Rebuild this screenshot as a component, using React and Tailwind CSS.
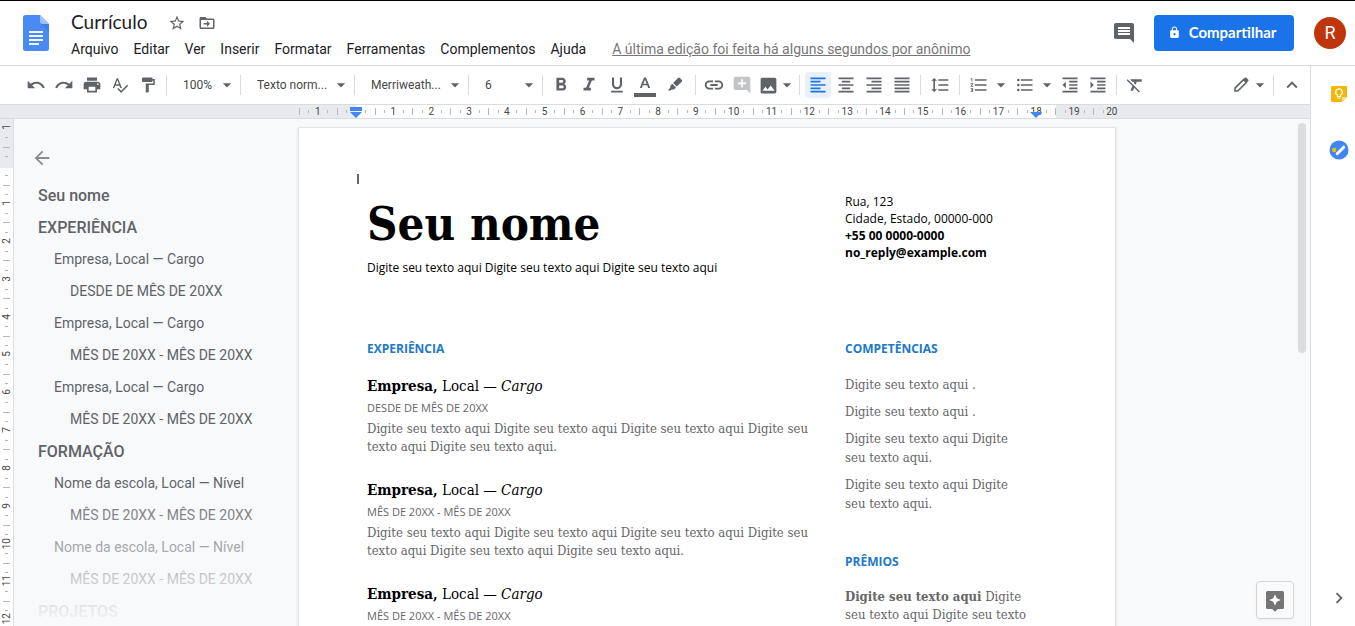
import React, { useState } from 'react';
import {
  MdAddComment,
  MdArrowBack,
  MdArrowDropDown,
  MdComment,
  MdFormatAlignCenter,
  MdFormatAlignJustify,
  MdFormatAlignLeft,
  MdFormatAlignRight,
  MdFormatBold,
  MdFormatClear,
  MdFormatIndentDecrease,
  MdFormatIndentIncrease,
  MdFormatItalic,
  MdFormatLineSpacing,
  MdFormatListBulleted,
  MdFormatListNumbered,
  MdFormatPaint,
  MdFormatUnderlined,
  MdImage,
  MdKeyboardArrowRight,
  MdKeyboardArrowUp,
  MdLink,
  MdLock,
  MdPrint,
  MdRedo,
  MdSpellcheck,
  MdStarBorder,
  MdUndo,
} from 'react-icons/md';

const menus = ['Arquivo', 'Editar', 'Ver', 'Inserir', 'Formatar', 'Ferramentas', 'Complementos', 'Ajuda'];

const outline = [
  { level: 1, text: 'Seu nome' },
  { level: 1, text: 'EXPERIÊNCIA' },
  { level: 2, text: 'Empresa, Local — Cargo' },
  { level: 3, text: 'DESDE DE MÊS DE 20XX' },
  { level: 2, text: 'Empresa, Local — Cargo' },
  { level: 3, text: 'MÊS DE 20XX - MÊS DE 20XX' },
  { level: 2, text: 'Empresa, Local — Cargo' },
  { level: 3, text: 'MÊS DE 20XX - MÊS DE 20XX' },
  { level: 1, text: 'FORMAÇÃO' },
  { level: 2, text: 'Nome da escola, Local — Nível' },
  { level: 3, text: 'MÊS DE 20XX - MÊS DE 20XX' },
  { level: 2, text: 'Nome da escola, Local — Nível' },
  { level: 3, text: 'MÊS DE 20XX - MÊS DE 20XX' },
  { level: 1, text: 'PROJETOS' },
];

const outlineStyles = {
  1: 'pt-0.5 pl-6 text-base font-medium',
  2: 'pl-10 text-sm',
  3: 'pl-14 text-sm',
};

const jobs = [
  {
    date: 'DESDE DE MÊS DE 20XX',
    lines: [
      'Digite seu texto aqui Digite seu texto aqui Digite seu texto aqui Digite seu',
      'texto aqui Digite seu texto aqui.',
    ],
  },
  {
    date: 'MÊS DE 20XX - MÊS DE 20XX',
    lines: [
      'Digite seu texto aqui Digite seu texto aqui Digite seu texto aqui Digite seu',
      'texto aqui Digite seu texto aqui Digite seu texto aqui.',
    ],
  },
  {
    date: 'MÊS DE 20XX - MÊS DE 20XX',
    lines: [],
  },
];

const skills = [
  ['Digite seu texto aqui .'],
  ['Digite seu texto aqui .'],
  ['Digite seu texto aqui Digite', 'seu texto aqui.'],
  ['Digite seu texto aqui Digite', 'seu texto aqui.'],
];

// one entry per centimetre, the origin has no label
const rulerMarks = ['1', ''].concat(Array.from({ length: 20 }, (_, i) => String(i + 1)));

const DocsLogo = () => (
  <svg width="26" height="36" viewBox="0 0 26 36">
    <path d="M2.500 0H17l9 9v24.500a2.500 2.500 0 0 1-2.500 2.500h-21A2.500 2.500 0 0 1 0 33.500v-31A2.500 2.500 0 0 1 2.500 0z" fill="#4a8af4" />
    <path d="M17 0l9 9h-6.500A2.500 2.500 0 0 1 17 6.500z" fill="#a1c2fa" />
    <path d="M17.700 8.600L26 17V9h-6.500z" fill="#3b78e0" opacity=".6" />
    <path d="M6 16h14v2H6zM6 20h14v2H6zM6 24h14v2H6zM6 28h10v2H6z" fill="#f1f5fe" />
  </svg>
);

const FolderMoveIcon = () => (
  <svg width="18" height="18" viewBox="0 0 24 24" fill="currentColor">
    <path
      fillRule="evenodd"
      d="M20 6h-8l-2-2H4c-1.100 0-2 .9-2 2v12c0 1.100.9 2 2 2h16c1.100 0 2-.9 2-2V8c0-1.100-.9-2-2-2zm0 12H4V8h16v10z"
    />
    <path d="M12 17l4-4-4-4v3H7.500v2H12z" />
  </svg>
);

const HighlighterIcon = () => (
  <svg width="16" height="16" viewBox="0 0 16 16" fill="currentColor">
    <path d="M11.200.8a1 1 0 0 1 1.400 0l2.300 2.300a1 1 0 0 1 0 1.400L9.800 9.600 6.100 5.900z" />
    <path d="M5.300 6.700l3.700 3.700-2 2H4.700L3.600 13.500H.8l2.500-2.800V8.700z" />
  </svg>
);

const PencilIcon = () => (
  <svg width="18" height="18" viewBox="0 0 18 18" fill="none" stroke="currentColor">
    <path d="M3 15v-2.800L11.500 3.700l2.800 2.800L5.800 15z" strokeWidth="1.600" />
    <path d="M11.200 3.400l1.700-1.700a1 1 0 0 1 1.400 0l2 2a1 1 0 0 1 0 1.400l-1.700 1.700z" fill="currentColor" stroke="none" />
  </svg>
);

const TextColorIcon = () => (
  <svg width="22" height="24" viewBox="0 0 22 24" fill="currentColor">
    <path d="M10 4.500h2l4.200 10.500h-2l-1-2.700H8.800l-1 2.700h-2zM9.400 10.700h3.200L11 6.500z" />
    <path d="M0 20h22v4H0z" />
  </svg>
);

const KeepIcon = () => (
  <svg width="16" height="16" viewBox="0 0 16 16">
    <path d="M1.200 0h13.600A1.200 1.200 0 0 1 16 1.200V11l-5 5H1.200A1.200 1.200 0 0 1 0 14.800V1.200A1.200 1.200 0 0 1 1.200 0z" fill="#f5b50a" />
    <path d="M11 16v-5h5z" fill="#fde08a" />
    <path d="M8 2.800a3.300 3.300 0 0 0-1.600 6.200v1.500h3.200V9A3.300 3.300 0 0 0 8 2.800zM6.500 12h3" fill="none" stroke="#fff" strokeWidth="1.200" />
  </svg>
);

const TasksIcon = () => (
  <svg width="20" height="20" viewBox="0 0 20 20">
    <circle cx="10" cy="10" r="9.500" fill="#4285f4" />
    <path d="M8.200 13.700l6.500-6.500" stroke="#fff" strokeWidth="3" strokeLinecap="round" />
    <circle cx="5.200" cy="10" r="2.200" fill="#fbbc04" />
  </svg>
);

const ExploreIcon = () => (
  <svg width="18" height="21" viewBox="0 0 18 21">
    <path d="M1.500 0h15A1.500 1.500 0 0 1 18 1.500v15a1.500 1.500 0 0 1-1.500 1.500h-4.700L9 20.800 6.200 18H1.500A1.500 1.500 0 0 1 0 16.500v-15A1.500 1.500 0 0 1 1.500 0z" fill="#757575" />
    <path d="M9 3.200l1.700 4.100L14.800 9l-4.100 1.700L9 14.800l-1.700-4.100L3.200 9l4.100-1.700z" fill="#fff" />
  </svg>
);

const ToolButton = ({ label, width = 'w-7', children }) => (
  <button type="button" aria-label={label} className={`flex h-7 shrink-0 items-center justify-center ${width}`}>
    {children}
  </button>
);

const Separator = () => <div className="mx-1 h-5 w-px shrink-0 bg-[#dadce0]" />;

const ToolSelect = ({ label, value, width }) => (
  <label className={`flex shrink-0 items-center ${width}`}>
    <select
      aria-label={label}
      defaultValue={value}
      className="min-w-0 flex-1 appearance-none bg-transparent pl-3 text-xs text-[#444746] outline-none"
    >
      <option>{value}</option>
    </select>
    <MdArrowDropDown size={20} className="pointer-events-none shrink-0" />
  </label>
);

const HorizontalRuler = () => (
  <div className="flex h-[15px] shrink-0 overflow-hidden border-y border-[#dadce0] bg-[#e8eaed] pl-[299px]">
    <div className="relative flex w-[816px] shrink-0 bg-[#e8eaed]">
      <div className="absolute inset-y-0 left-[57px] w-[700px] bg-white" />
      <div className="relative flex w-[832px] shrink-0">
        {rulerMarks.map((mark, i) => (
          <div key={i} className="grid min-w-0 flex-1 grid-cols-8 items-center text-[10px] leading-[13px] text-[#444746]">
            <span className="h-[7px] w-px bg-[#b5b8bc]" />
            <span />
            <span className="h-[3px] w-px bg-[#b5b8bc]" />
            <span className="col-span-3 flex justify-center pr-[5px]">{mark}</span>
            {i < rulerMarks.length - 1 && <span className="h-[3px] w-px bg-[#b5b8bc]" />}
          </div>
        ))}
      </div>
      <svg width="12" height="11" viewBox="0 0 12 11" className="absolute top-[2px] left-[51px]" fill="#4285f4">
        <path d="M0 0h12v4H0zM0 5h12l-6 6z" />
      </svg>
      <svg width="12" height="6" viewBox="0 0 12 6" className="absolute top-[7px] left-[731px]" fill="#4285f4">
        <path d="M0 0h12L6 6z" />
      </svg>
    </div>
  </div>
);

const VerticalRuler = () => (
  <div className="relative w-[14px] shrink-0 overflow-hidden border-r border-[#dadce0] bg-white">
    <div className="h-[49px] bg-[#e8eaed]" />
    <div className="absolute inset-x-0 -top-[10px] flex h-[832px] flex-col">
      {rulerMarks.map((mark, i) => (
        <div key={i} className="grid min-h-0 flex-1 grid-rows-8 justify-items-center text-[10px] leading-[13px] text-[#444746]">
          <span className="h-px w-[7px] bg-[#b5b8bc]" />
          <span />
          <span className="h-px w-[3px] bg-[#b5b8bc]" />
          <span className="row-span-3 flex min-h-0 items-center pb-[6px]">
            <span className="rotate-180 [writing-mode:vertical-rl]">{mark}</span>
          </span>
          <span className="h-px w-[3px] bg-[#b5b8bc]" />
        </div>
      ))}
    </div>
  </div>
);

const Header = () => {
  const [title, setTitle] = useState('Currículo');

  return (
    <header className="flex h-[66px] shrink-0 items-center border-t border-b border-t-black border-b-[#dadce0] pr-[9px] pl-[23px]">
      <DocsLogo />
      <div className="ml-[22px] flex flex-col pt-[3px]">
        <div className="flex h-7 items-center text-[#5f6368]">
          <input
            type="text"
            aria-label="Nome do documento"
            value={title}
            onChange={(e) => setTitle(e.target.value)}
            className="w-[91px] font-['Lato',sans-serif] text-[19px] text-[#202124] outline-none"
          />
          <button type="button" aria-label="Marcar com estrela" className="flex w-[30px] justify-center">
            <MdStarBorder size={18} />
          </button>
          <button type="button" aria-label="Mover" className="flex w-[30px] justify-center">
            <FolderMoveIcon />
          </button>
        </div>
        <div className="flex h-6 items-center text-sm whitespace-nowrap text-[#202124]">
          <nav className="flex gap-[15px]">
            {menus.map((menu) => (
              <button type="button" key={menu}>
                {menu}
              </button>
            ))}
          </nav>
          <a href="#historico" className="ml-[26px] text-[#777] underline">
            A última edição foi feita há alguns segundos por anônimo
          </a>
        </div>
      </div>
      <div className="ml-auto flex items-center gap-5">
        <button type="button" aria-label="Comentários" className="text-[#5f6368]">
          <MdComment size={24} className="-mr-0.5" />
        </button>
        <button
          type="button"
          className="flex h-9 w-[140px] items-center justify-center gap-2 rounded bg-[#1a73e8] pr-1 pb-0.5 font-['Lato',sans-serif] text-[15px] font-bold text-white"
        >
          <MdLock size={13} />
          Compartilhar
        </button>
        <button type="button" aria-label="Conta" className="h-8 w-8 rounded-full bg-[#bf360c] text-lg text-white">
          R
        </button>
      </div>
    </header>
  );
};

const Toolbar = () => (
  <div className="flex h-[38px] shrink-0 items-center pr-1 pl-[22px] text-[#5f6368]">
    <ToolButton label="Desfazer"><MdUndo size={20} /></ToolButton>
    <ToolButton label="Refazer"><MdRedo size={20} /></ToolButton>
    <ToolButton label="Imprimir"><MdPrint size={20} /></ToolButton>
    <ToolButton label="Ortografia"><MdSpellcheck size={18} /></ToolButton>
    <ToolButton label="Pintar formatação"><MdFormatPaint size={18} /></ToolButton>
    <Separator />
    <ToolSelect label="Zoom" value="100%" width="w-[66px] -mr-px" />
    <Separator />
    <ToolSelect label="Estilo" value="Texto norm..." width="w-[106px] -mr-px" />
    <Separator />
    <ToolSelect label="Fonte" value="Merriweath..." width="w-[106px] -mr-px" />
    <Separator />
    <ToolSelect label="Tamanho" value="6" width="w-[66px] -mr-px" />
    <Separator />
    <ToolButton label="Negrito"><MdFormatBold size={22} /></ToolButton>
    <ToolButton label="Itálico"><MdFormatItalic size={22} /></ToolButton>
    <ToolButton label="Sublinhado"><MdFormatUnderlined size={20} /></ToolButton>
    <ToolButton label="Cor do texto"><TextColorIcon /></ToolButton>
    <ToolButton label="Destaque" width="w-8"><HighlighterIcon /></ToolButton>
    <Separator />
    <ToolButton label="Inserir link"><MdLink size={22} /></ToolButton>
    <ToolButton label="Comentar">
      <MdAddComment size={20} className="text-[#c2c4c6]" />
    </ToolButton>
    <ToolButton label="Imagem" width="w-6"><MdImage size={21} /></ToolButton>
    <ToolButton label="Opções de imagem" width="w-[15px]"><MdArrowDropDown size={20} className="-ml-0.5 shrink-0" /></ToolButton>
    <Separator />
    <button
      type="button"
      aria-label="Alinhar à esquerda"
      className="mx-px flex h-[26px] w-[26px] shrink-0 items-center justify-center rounded-sm bg-[#e8f0fe] text-[#1a73e8]"
    >
      <MdFormatAlignLeft size={20} />
    </button>
    <ToolButton label="Centralizar"><MdFormatAlignCenter size={20} /></ToolButton>
    <ToolButton label="Alinhar à direita"><MdFormatAlignRight size={20} /></ToolButton>
    <ToolButton label="Justificar"><MdFormatAlignJustify size={20} /></ToolButton>
    <Separator />
    <ToolButton label="Espaçamento" width="w-[30px]"><MdFormatLineSpacing size={20} /></ToolButton>
    <Separator />
    <ToolButton label="Lista numerada" width="w-[30px]"><MdFormatListNumbered size={20} /></ToolButton>
    <ToolButton label="Opções de lista numerada" width="w-4"><MdArrowDropDown size={20} className="-ml-0.5 shrink-0" /></ToolButton>
    <ToolButton label="Lista com marcadores" width="w-[30px]"><MdFormatListBulleted size={20} /></ToolButton>
    <ToolButton label="Opções de marcadores" width="w-4"><MdArrowDropDown size={20} className="-ml-0.5 shrink-0" /></ToolButton>
    <ToolButton label="Diminuir recuo"><MdFormatIndentDecrease size={20} /></ToolButton>
    <ToolButton label="Aumentar recuo"><MdFormatIndentIncrease size={20} /></ToolButton>
    <Separator />
    <ToolButton label="Limpar formatação"><MdFormatClear size={20} /></ToolButton>
    <div className="ml-auto flex items-center">
      <ToolButton label="Modo de edição" width="w-6"><PencilIcon /></ToolButton>
      <ToolButton label="Opções de modo" width="w-4"><MdArrowDropDown size={20} className="-ml-0.5 shrink-0" /></ToolButton>
      <Separator />
      <ToolButton label="Ocultar menus"><MdKeyboardArrowUp size={22} /></ToolButton>
    </div>
  </div>
);

const Outline = () => (
  <nav className="relative w-[284px] shrink-0 overflow-hidden pt-7 text-[#5f6368]">
    <button type="button" aria-label="Fechar estrutura" className="ml-[17px] block text-[#8a8d91]">
      <MdArrowBack size={22} />
    </button>
    <ul className="mt-[10px]">
      {outline.map((item, i) => (
        <li key={i} className={`flex h-8 items-center whitespace-nowrap ${outlineStyles[item.level]}`}>
          {item.text}
        </li>
      ))}
    </ul>
    <div className="pointer-events-none absolute inset-x-0 bottom-0 h-36 bg-linear-to-b from-transparent to-[#f8f9fa]" />
  </nav>
);

const SectionTitle = ({ children }) => (
  <h2 className="font-['Open_Sans',sans-serif] text-xs leading-[17px] font-bold text-[#2079c7]">{children}</h2>
);

const Lines = ({ lines }) =>
  lines.map((line, i) => (
    <React.Fragment key={i}>
      {i > 0 && <br />}
      {line}
    </React.Fragment>
  ));

const Page = () => (
  <article className="relative mt-2 h-[1056px] w-[818px] shrink-0 border border-[#e3e5e8] bg-white pt-16 pl-[68px] font-['DejaVu_Serif_Condensed','Liberation_Serif',serif] shadow-sm">
    {/* text cursor */}
    <div className="absolute top-[46px] left-[58px] h-[10px] w-0.5 bg-[#666]" />
    <div className="grid grid-cols-[478px_1fr] text-black">
      <div>
        <h1 className="text-[47px] leading-16 font-bold">Seu nome</h1>
        <p className="mt-[3px] font-['Open_Sans',sans-serif] text-xs leading-[17px]">
          Digite seu texto aqui Digite seu texto aqui Digite seu texto aqui
        </p>
      </div>
      <address className="pt-px font-['Open_Sans',sans-serif] text-xs leading-[17px] not-italic">
        Rua, 123
        <br />
        Cidade, Estado, 00000-000
        <br />
        <strong>
          +55 00 0000-0000
          <br />
          no_reply@example.com
        </strong>
      </address>
    </div>
    <div className="mt-16 grid grid-cols-[478px_1fr] text-[13px] text-[#666]">
      <section>
        <SectionTitle>EXPERIÊNCIA</SectionTitle>
        <div className="mt-[19px] flex flex-col gap-6">
          {jobs.map((job, i) => (
            <div key={i} className="whitespace-nowrap">
              <h3 className="text-[15px] leading-5 text-black">
                <strong>Empresa,</strong> Local — <em>Cargo</em>
              </h3>
              <p className="mt-1 font-['Open_Sans',sans-serif] text-[11px] leading-4">{job.date}</p>
              <p className="mt-1 leading-[18px]">
                <Lines lines={job.lines} />
              </p>
            </div>
          ))}
        </div>
      </section>
      <section>
        <SectionTitle>COMPETÊNCIAS</SectionTitle>
        <div className="mt-[18px] flex flex-col gap-2 leading-[19px]">
          {skills.map((lines, i) => (
            <p key={i}>
              <Lines lines={lines} />
            </p>
          ))}
        </div>
        <div className="mt-10">
          <SectionTitle>PRÊMIOS</SectionTitle>
          <p className="mt-[18px] leading-[18px]">
            <strong>Digite seu texto aqui</strong> Digite
            <br />
            seu texto aqui Digite seu texto
          </p>
        </div>
      </section>
    </div>
  </article>
);

const SideRail = () => (
  <aside className="flex w-[45px] shrink-0 flex-col items-center border-l border-[#dadce0] pt-5 pb-[17px] pl-3">
    <button type="button" aria-label="Keep"><KeepIcon /></button>
    <button type="button" aria-label="Tarefas" className="mt-[38px]"><TasksIcon /></button>
    <button type="button" aria-label="Ocultar painel lateral" className="mt-auto text-[#5f6368]">
      <MdKeyboardArrowRight size={22} />
    </button>
  </aside>
);

const App = () => {
  return (
    <div className="flex h-screen flex-col overflow-hidden bg-white font-['Roboto',sans-serif]">
      <Header />
      <div className="flex min-h-0 flex-1">
        <main className="flex min-w-0 flex-1 flex-col">
          <Toolbar />
          <HorizontalRuler />
          <div className="relative flex min-h-0 flex-1 overflow-hidden bg-[#f8f9fa]">
            <VerticalRuler />
            <Outline />
            <Page />
            <div className="absolute top-1 right-1 h-[230px] w-2 rounded-full bg-[#dadce0]" />
            <button
              type="button"
              aria-label="Explorar"
              className="absolute right-4 bottom-[7px] flex h-[38px] w-[38px] items-center justify-center rounded-sm border border-[#d5d5d5] bg-[#fafafa] pt-0.5 shadow-xs"
            >
              <ExploreIcon />
            </button>
          </div>
        </main>
        <SideRail />
      </div>
    </div>
  );
};

export default App;
